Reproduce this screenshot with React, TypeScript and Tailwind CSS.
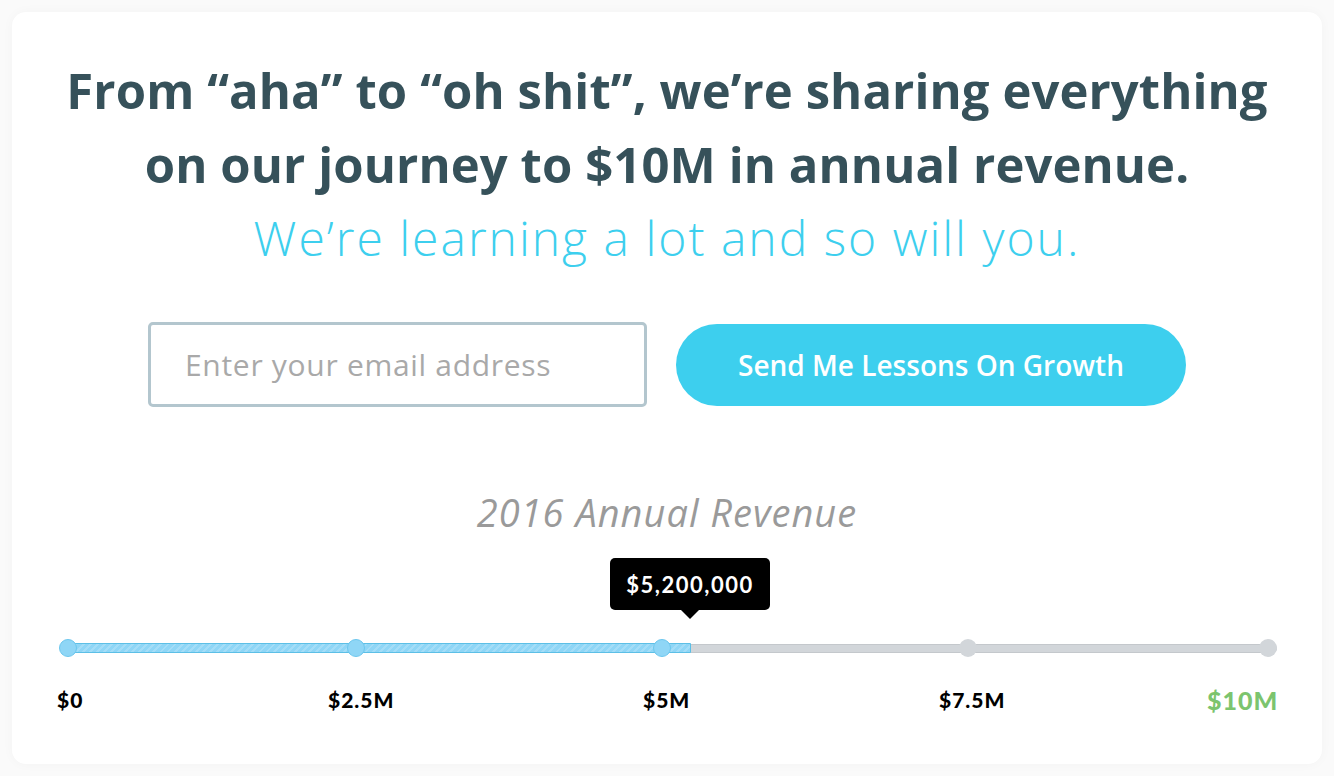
import React from 'react'

const ticks = [
  { x: 8, label: '$0', labelLeft: -3, active: true },
  { x: 296, label: '$2.5M', labelLeft: 268, active: true },
  { x: 602, label: '$5M', labelLeft: 583, active: true },
  { x: 908, label: '$7.5M', labelLeft: 879, active: false },
  { x: 1208, label: '$10M', labelLeft: 1147, active: false },
]

export default function App() {
  return (
    <main className="min-h-screen w-full bg-[#fafafa] p-[12px]" style={{ fontFamily: '"Open Sans", sans-serif' }}>
      <div className="h-[752px] rounded-[14px] bg-white shadow-[0_0_12px_rgba(0,0,0,0.03)]">
        <section className="flex flex-col items-center pt-[41px]">
          <h1 className="text-center text-[49px] font-bold leading-[74px] tracking-[0.1px] text-[#36515a]">
            From “aha” to “oh shit”, we’re sharing everything
            <br />
            on our journey to $10M in annual revenue.
          </h1>
          <p className="text-center text-[48px] font-light leading-[74px] tracking-[2px] text-[#3dcfee]">
            We’re learning a lot and so will you.
          </p>

          <form className="mt-[47px] flex items-center gap-[29px]" onSubmit={(e) => e.preventDefault()}>
            <input
              type="email"
              placeholder="Enter your email address"
              className="h-[85px] w-[499px] rounded-[5px] border-[3px] border-[#b3c6ce] bg-white px-[34px] text-[30px] tracking-[0.7px] text-[#333] outline-none placeholder:text-[#a9a9a9]"
            />
            <button
              type="submit"
              className="h-[82px] w-[510px] rounded-full bg-[#3dcfee] text-[28px] font-semibold text-white"
            >
              Send Me Lessons On Growth
            </button>
          </form>

          <p className="mt-[83px] text-[38px] italic leading-[44px] tracking-[1px] text-[#9a9a9a]">2016 Annual Revenue</p>
        </section>

        <div className="relative ml-[48px] mt-[24px] h-[160px] w-[1217px]" style={{ fontFamily: 'Lato, sans-serif' }}>
          {/* tooltip */}
          <div className="absolute left-[550px] top-0 flex h-[52px] w-[160px] items-center justify-center rounded-[5px] bg-black text-[22px] font-bold tracking-[1.5px] text-white">
            $5,200,000
          </div>
          <div className="absolute left-[621px] top-[52px] h-0 w-0 border-x-[9px] border-t-[9px] border-x-transparent border-t-black" />

          {/* track */}
          <div className="absolute left-0 top-[86px] h-[9px] w-[1217px] rounded-full border border-[#c4c8cc] bg-[#d2d6da]" />
          <div
            className="absolute left-0 top-[85px] h-[10px] w-[631px] rounded-l-full border border-[#5cbfe6] bg-[#8fd6f6]"
            style={{ backgroundImage: 'repeating-linear-gradient(135deg, rgba(255,255,255,0.18) 0 2px, transparent 2px 5px)' }}
          />

          {ticks.map((t) => (
            <div
              key={t.label}
              className={`absolute top-[81px] h-[18px] w-[18px] -translate-x-1/2 rounded-full ${
                t.active ? 'border border-[#6cc7ee] bg-[#8fd6f6]' : 'bg-[#d2d6da]'
              }`}
              style={{ left: t.x }}
            />
          ))}

          {ticks.map((t) => (
            <span
              key={t.label + '-l'}
              className={`absolute top-[128px] font-black leading-[28px] tracking-[1px] ${
                t.label === '$10M' ? 'text-[25px] text-[#7cc46e]' : 'text-[21px] text-black'
              }`}
              style={{ left: t.labelLeft }}
            >
              {t.label}
            </span>
          ))}
        </div>
      </div>
    </main>
  )
}
